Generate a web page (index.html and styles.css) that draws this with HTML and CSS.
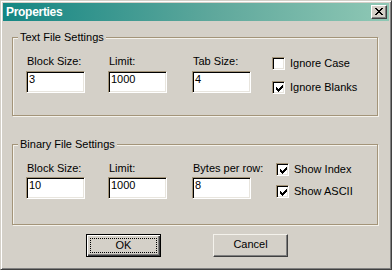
FILE: index.html
```html
<!DOCTYPE html>
<html>
<head>
<meta charset="utf-8">
<title>Properties</title>
<link rel="stylesheet" href="styles.css">
</head>
<body>
<div class="window">
  <div class="titlebar">
    <span class="title">Properties</span>
    <span class="close" aria-label="Close">
      <svg width="8" height="7" viewBox="0 0 8 7" shape-rendering="crispEdges"><path fill="#000" d="M0 0h2v1h-2z M6 0h2v1h-2z M1 1h2v1h-2z M5 1h2v1h-2z M2 2h4v1h-4z M3 3h2v1h-2z M2 4h4v1h-4z M1 5h2v1h-2z M5 5h2v1h-2z M0 6h2v1h-2z M6 6h2v1h-2z"/></svg>
    </span>
  </div>
  <div class="content">
    <fieldset class="group group-text">
      <legend>Text File Settings</legend>
      <div class="fields">
        <div class="field"><span class="label">Block Size:</span><span class="edit">3</span></div>
        <div class="field"><span class="label">Limit:</span><span class="edit">1000</span></div>
        <div class="field"><span class="label">Tab Size:</span><span class="edit">4</span></div>
        <div class="checks">
          <div class="check"><span class="box"></span><span>Ignore Case</span></div>
          <div class="check"><span class="box"><svg width="7" height="7" viewBox="0 0 7 7" shape-rendering="crispEdges"><path fill="#000" d="M6 0h1v1h-1z M5 1h2v1h-2z M0 2h1v1h-1z M4 2h3v1h-3z M0 3h2v1h-2z M3 3h3v1h-3z M0 4h5v1h-5z M1 5h3v1h-3z M2 6h1v1h-1z"/></svg></span><span>Ignore Blanks</span></div>
        </div>
      </div>
    </fieldset>
    <fieldset class="group group-bin">
      <legend>Binary File Settings</legend>
      <div class="fields">
        <div class="field"><span class="label">Block Size:</span><span class="edit">10</span></div>
        <div class="field"><span class="label">Limit:</span><span class="edit">1000</span></div>
        <div class="field"><span class="label">Bytes per row:</span><span class="edit">8</span></div>
        <div class="checks">
          <div class="check"><span class="box"><svg width="7" height="7" viewBox="0 0 7 7" shape-rendering="crispEdges"><path fill="#000" d="M6 0h1v1h-1z M5 1h2v1h-2z M0 2h1v1h-1z M4 2h3v1h-3z M0 3h2v1h-2z M3 3h3v1h-3z M0 4h5v1h-5z M1 5h3v1h-3z M2 6h1v1h-1z"/></svg></span><span>Show Index</span></div>
          <div class="check"><span class="box"><svg width="7" height="7" viewBox="0 0 7 7" shape-rendering="crispEdges"><path fill="#000" d="M6 0h1v1h-1z M5 1h2v1h-2z M0 2h1v1h-1z M4 2h3v1h-3z M0 3h2v1h-2z M3 3h3v1h-3z M0 4h5v1h-5z M1 5h3v1h-3z M2 6h1v1h-1z"/></svg></span><span>Show ASCII</span></div>
        </div>
      </div>
    </fieldset>
    <div class="buttons">
      <span class="btn btn-default"><span class="focus">OK</span></span>
      <span class="btn">Cancel</span>
    </div>
  </div>
</div>
</body>
</html>
```
FILE: styles.css
```css
html, body {
  margin: 0;
  padding: 0;
  background: #d4d0c8;
}
body {
  width: 392px;
  height: 270px;
  overflow: hidden;
  font-family: "Liberation Sans", Arial, sans-serif;
  font-size: 11px;
  line-height: 13px;
  color: #000;
}
.window {
  box-sizing: border-box;
  width: 392px;
  height: 270px;
  padding: 2px;
  background: #d4d0c8;
  border: 1px solid;
  border-color: #d4d0c8 #404040 #404040 #d4d0c8;
  box-shadow: inset 1px 1px 0 #fff, inset -1px -1px 0 #808080;
}
.titlebar {
  height: 18px;
  display: flex;
  align-items: center;
  justify-content: space-between;
  padding: 0 2px 0 3px;
  background: linear-gradient(to right, #148683, #5fa89c 55%, #8fc8b5);
}
.title {
  color: #fff;
  font-weight: bold;
  font-size: 12px;
  line-height: 18px;
  letter-spacing: -0.3px;
}
.close {
  box-sizing: border-box;
  width: 16px;
  height: 14px;
  display: flex;
  align-items: flex-start;
  padding: 2px 0 0 3px;
  background: #d4d0c8;
  border: 1px solid;
  border-color: #fff #404040 #404040 #fff;
  box-shadow: inset -1px -1px 0 #808080;
}
.close svg { display: block; }
.content {
  padding: 10px 11px 0 9px;
}
.group {
  margin: 0;
  min-width: 0;
  border: 1px solid #a39479;
  box-shadow: inset 1px 1px 0 #f4f2ec, 1px 1px 0 #f4f2ec;
}
.group legend {
  padding: 0 2px;
  background: #d4d0c8;
  line-height: 13px;
}
.group-text {
  padding: 11px 0 21px 5px;
}
.group-bin {
  margin-top: 22px;
  padding: 11px 0 25px 5px;
}
.fields {
  display: grid;
  align-items: start;
  margin-left: 8px;
}
.group-text .fields { grid-template-columns: 82px 84px 80px auto; }
.group-bin .fields { grid-template-columns: 82px 84px 84px auto; }
.field {
  display: flex;
  flex-direction: column;
  gap: 3px;
}
.group-bin .field { gap: 2px; }
.label {
  padding-left: 1px;
  white-space: nowrap;
}
.edit {
  box-sizing: border-box;
  width: 59px;
  height: 22px;
  padding: 1px 2px;
  background: #fff;
  border: 1px solid;
  border-color: #a39479 #fff #fff #a39479;
  box-shadow: inset 1px 1px 0 #000, inset -1px -1px 0 #e8e5de;
}
.checks {
  display: flex;
  flex-direction: column;
}
.group-text .checks { padding-top: 2px; gap: 11px; }
.group-bin .checks { padding-top: 1px; gap: 9px; }
.check {
  display: flex;
  align-items: center;
  gap: 5px;
  white-space: nowrap;
}
.box {
  box-sizing: border-box;
  width: 13px;
  height: 13px;
  padding: 2px 0 0 2px;
  background: #fff;
  border: 1px solid;
  border-color: #a39479 #fff #fff #a39479;
  box-shadow: inset 1px 1px 0 #000, inset -1px -1px 0 #e8e5de;
}
.box svg { display: block; margin: 1px 0 0 1px; }
.buttons {
  display: flex;
  gap: 52px;
  margin-top: 9px;
  padding-left: 74px;
}
.btn {
  box-sizing: border-box;
  width: 75px;
  height: 23px;
  display: flex;
  justify-content: center;
  padding-top: 3px;
  background: #d4d0c8;
  border: 1px solid;
  border-color: #f4f2ec #404040 #404040 #f4f2ec;
  box-shadow: inset -1px -1px 0 #808080;
}
.btn-default {
  padding: 3px;
  border-color: #000;
  box-shadow: inset 1px 1px 0 #fff, inset -1px -1px 0 #404040, inset -2px -2px 0 #808080;
}
.focus {
  flex: 1;
  height: 15px;
  box-sizing: border-box;
  border: 1px dotted #000;
  text-align: center;
  line-height: 12px;
}
```
